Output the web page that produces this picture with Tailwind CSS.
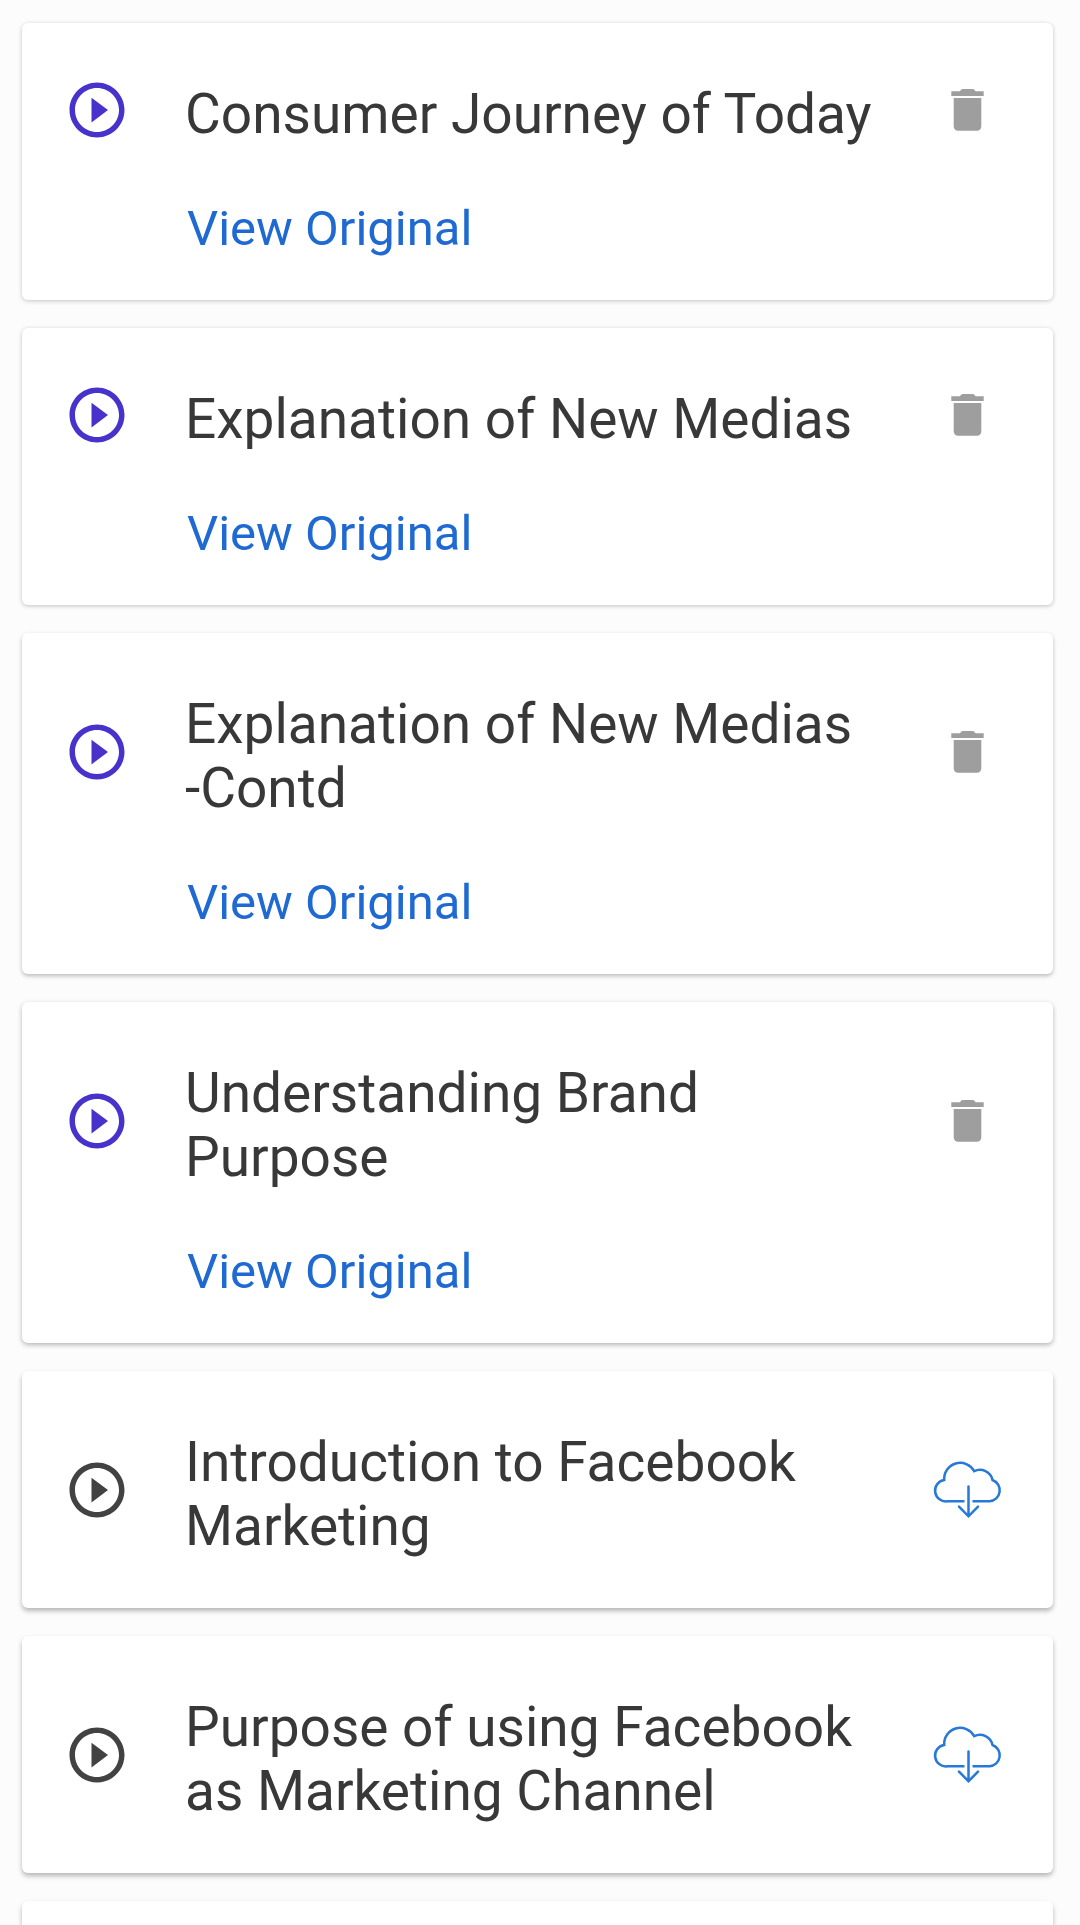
<!DOCTYPE html>
<html lang="en">
<head>
<meta charset="utf-8">
<meta name="viewport" content="width=device-width, initial-scale=1">
<title>Course lessons</title>
<script src="https://cdn.jsdelivr.net/npm/@tailwindcss/browser@4"></script>
</head>
<body class="bg-[#fcfcfc] font-['Roboto',sans-serif] text-[#383838]">
<svg class="hidden" aria-hidden="true">
  <symbol id="play" viewBox="0 0 24 24">
    <path fill="currentColor" d="M10 16.5l6-4.5-6-4.5v9zM12 2C6.48 2 2 6.48 2 12s4.48 10 10 10 10-4.48 10-10S17.52 2 12 2zm0 18c-4.41 0-8-3.59-8-8s3.59-8 8-8 8 3.59 8 8-3.59 8-8 8z"/>
  </symbol>
  <symbol id="trash" viewBox="0 0 66 66">
    <path fill="currentColor" d="M17.3 14.3H26Q27 12 29 12H38.5Q40.5 12 41.5 14.3H49.7V19H17.3zM19.7 21H47.3V49Q47.3 53.7 42.6 53.7H24.4Q19.7 53.7 19.7 49z"/>
  </symbol>
  <symbol id="cloud" viewBox="0 0 66 66" overflow="visible">
    <g fill="none" stroke="currentColor" stroke-width="2.5">
      <path d="M30.500 44.300H13.500A10.700 10.700 0 0 1 10.200 23A16 16 0 0 1 40.200 14.200A12.900 12.900 0 0 1 58.500 23A11 11 0 0 1 55.500 44.300H38.500"/>
      <path stroke-linecap="round" d="M34.500 29.500V59M25 49.700L34.500 59.300L44 49.700"/>
    </g>
  </symbol>
</svg>
<main class="flex min-h-screen flex-col gap-7 pt-[23px] pr-[27px] pl-[22px]">

  <article class="rounded-md bg-white pt-[51px] pr-[53px] pb-[43px] pl-[42px] shadow-[0_1px_4px_rgba(0,0,0,0.22)]">
    <div class="flex items-center">
      <button type="button" aria-label="Play" class="text-[#4733cb]"><svg class="size-[66px]"><use href="#play"/></svg></button>
      <h2 class="ml-[55px] flex-1 pt-2 text-[55px] leading-[64px]">Consumer Journey of Today</h2>
      <button type="button" aria-label="Delete" class="ml-9 text-[#9e9e9e]"><svg class="size-[66px]"><use href="#trash"/></svg></button>
    </div>
    <a href="#" class="mt-[54px] ml-[123px] block w-fit text-[49px] leading-[57px] text-[#1f69d2]">View Original</a>
  </article>

  <article class="rounded-md bg-white pt-[51px] pr-[53px] pb-[43px] pl-[42px] shadow-[0_1px_4px_rgba(0,0,0,0.24)]">
    <div class="flex items-center">
      <button type="button" aria-label="Play" class="text-[#4733cb]"><svg class="size-[66px]"><use href="#play"/></svg></button>
      <h2 class="ml-[55px] flex-1 pt-2 text-[55px] leading-[64px]">Explanation of New Medias</h2>
      <button type="button" aria-label="Delete" class="ml-9 text-[#9e9e9e]"><svg class="size-[66px]"><use href="#trash"/></svg></button>
    </div>
    <a href="#" class="mt-[54px] ml-[123px] block w-fit text-[49px] leading-[57px] text-[#1f69d2]">View Original</a>
  </article>

  <article class="rounded-md bg-white pt-[51px] pr-[53px] pb-[43px] pl-[42px] shadow-[0_2px_4px_rgba(0,0,0,0.26)]">
    <div class="flex items-center">
      <button type="button" aria-label="Play" class="text-[#4733cb]"><svg class="size-[66px]"><use href="#play"/></svg></button>
      <h2 class="ml-[55px] flex-1 pt-2 text-[55px] leading-[64px]">Explanation of New Medias<br>-Contd</h2>
      <button type="button" aria-label="Delete" class="ml-9 text-[#9e9e9e]"><svg class="size-[66px]"><use href="#trash"/></svg></button>
    </div>
    <a href="#" class="mt-[54px] ml-[123px] block w-fit text-[49px] leading-[57px] text-[#1f69d2]">View Original</a>
  </article>

  <article class="rounded-md bg-white pt-[51px] pr-[53px] pb-[43px] pl-[42px] shadow-[0_2px_5px_rgba(0,0,0,0.28)]">
    <div class="flex items-center">
      <button type="button" aria-label="Play" class="text-[#4733cb]"><svg class="size-[66px]"><use href="#play"/></svg></button>
      <h2 class="ml-[55px] flex-1 pt-2 text-[55px] leading-[64px]">Understanding Brand<br>Purpose</h2>
      <button type="button" aria-label="Delete" class="ml-9 text-[#9e9e9e]"><svg class="size-[66px]"><use href="#trash"/></svg></button>
    </div>
    <a href="#" class="mt-[54px] ml-[123px] block w-fit text-[49px] leading-[57px] text-[#1f69d2]">View Original</a>
  </article>

  <article class="flex items-center rounded-md bg-white pt-[51px] pr-[53px] pb-[50px] pl-[42px] shadow-[0_3px_5px_rgba(0,0,0,0.28)]">
    <button type="button" aria-label="Play" class="text-[#424242]"><svg class="size-[66px]"><use href="#play"/></svg></button>
    <h2 class="ml-[55px] flex-1 pt-2 text-[55px] leading-[64px]">Introduction to Facebook<br>Marketing</h2>
    <button type="button" aria-label="Download" class="ml-9 text-[#2679d9]"><svg class="size-[66px] overflow-visible"><use href="#cloud"/></svg></button>
  </article>

  <article class="flex items-center rounded-md bg-white pt-[51px] pr-[53px] pb-[50px] pl-[42px] shadow-[0_3px_5px_rgba(0,0,0,0.28)]">
    <button type="button" aria-label="Play" class="text-[#424242]"><svg class="size-[66px]"><use href="#play"/></svg></button>
    <h2 class="ml-[55px] flex-1 pt-2 text-[55px] leading-[64px]">Purpose of using Facebook<br>as Marketing Channel</h2>
    <button type="button" aria-label="Download" class="ml-9 text-[#2679d9]"><svg class="size-[66px] overflow-visible"><use href="#cloud"/></svg></button>
  </article>

  <article class="flex-1 rounded-t-md bg-white shadow-[0_3px_5px_rgba(0,0,0,0.28)]"></article>
</main>
</body>
</html>
